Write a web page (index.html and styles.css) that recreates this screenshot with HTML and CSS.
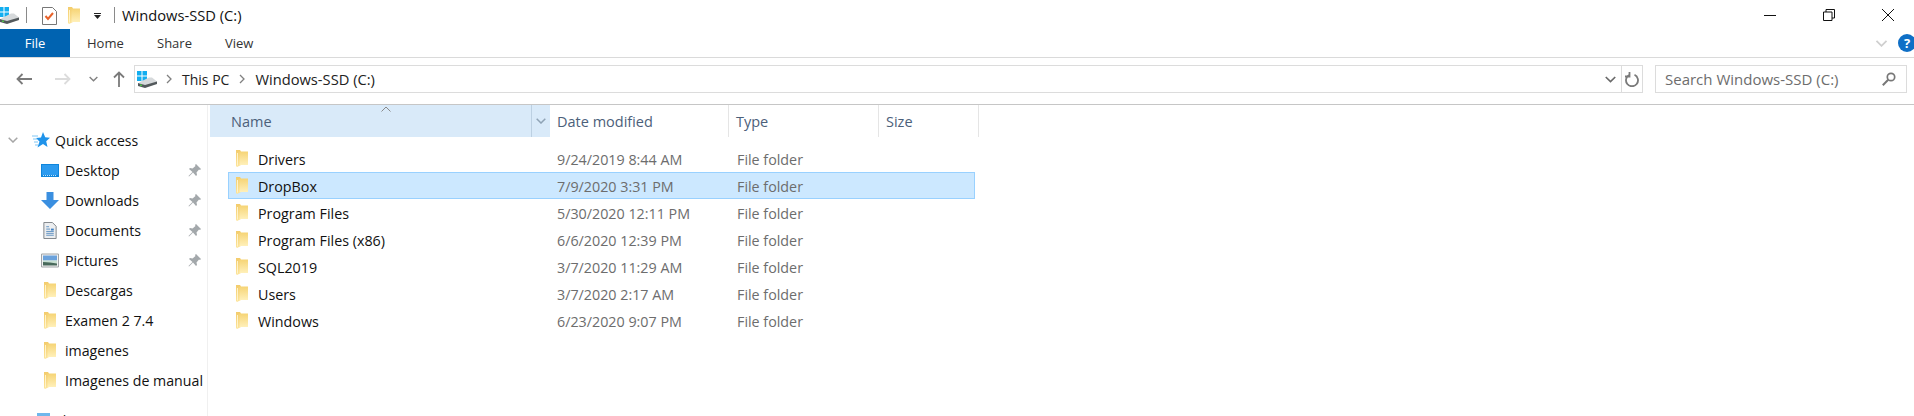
FILE: index.html
```html
<!DOCTYPE html>
<html lang="en">
<head>
  <meta charset="UTF-8">
  <title>Windows-SSD (C:)</title>
  <link rel="stylesheet" href="styles.css">
</head>
<body>

  <!-- shared icons -->
  <svg class="defs" aria-hidden="true">
    <defs>
      <linearGradient id="folderFill" x1="0" y1="0" x2="0" y2="1">
        <stop offset="0" stop-color="#f6d475"/>
        <stop offset="1" stop-color="#fff0ba"/>
      </linearGradient>
      <linearGradient id="folderFlap" x1="0" y1="0" x2="0" y2="1">
        <stop offset="0" stop-color="#f3cc6c"/>
        <stop offset="1" stop-color="#fde59c"/>
      </linearGradient>
      <symbol id="folder" viewBox="0 0 12 17">
        <path d="M0 0h4l1 1.500V15l-4 2-1-1z" fill="url(#folderFlap)"/>
        <path d="M3.500 1.500H12V15H3.500z" fill="url(#folderFill)"/>
        <path d="M1.500 3v12.500" stroke="#fff3c9" stroke-width="1"/>
      </symbol>
      <symbol id="drive" viewBox="0 0 20 17">
        <path d="M0 0h4.500v4.500H0zM5.500 0H10v4.500H5.500zM0 5.500h4.500V10H0zM5.500 5.500H10V10H5.500z" fill="#12aef0"/>
        <path d="M2 11.500L12 6.500h3L20 10.500v2.500L8 15z" fill="#d6d9db"/>
        <path d="M1 12l7 2 12-3.500V13L8 17 1 15z" fill="#53595c"/>
        <path d="M3 13.500h2v1.500H3z" fill="#4fc04a"/>
      </symbol>
      <symbol id="pin" viewBox="0 0 13 13">
        <path d="M8 0l5 5-1 1-1-.5L8.500 8.500 9 11l-1 1-3-3.500L1 12.500.5 12 4.500 8 1 5l1-1 2.500.5L7.500 2 7 1z" fill="#a3a8ab"/>
      </symbol>
      <symbol id="chev" viewBox="0 0 10 6">
        <path d="M.7.700L5 5l4.300-4.300" fill="none" stroke="currentColor" stroke-width="1.500"/>
      </symbol>
    </defs>
  </svg>

  <header class="titlebar">
    <svg class="qa-drive"><use href="#drive"/></svg>
    <span class="qa-sep"></span>
    <svg class="qa-props" viewBox="0 0 15 18">
      <path d="M.5.500h10l4 4v13H.5z" fill="#fff" stroke="#777"/>
      <path d="M3.500 9l2.500 3 5-6" fill="none" stroke="#e8622a" stroke-width="2"/>
    </svg>
    <svg class="qa-folder"><use href="#folder"/></svg>
    <svg class="qa-more" viewBox="0 0 7 6">
      <path d="M0 0h7v1H0zM0 2h7L3.500 6z" fill="#222"/>
    </svg>
    <span class="qa-sep title-sep"></span>
    <span class="window-title">Windows-SSD (C:)</span>
    <div class="window-controls">
      <svg class="win-btn" viewBox="0 0 12 12"><path d="M0 6.500h12" stroke="#111" fill="none"/></svg>
      <svg class="win-btn" viewBox="0 0 12 12"><path d="M.5 3h8.500v8.500H.5zM3 3V.500h8.500V9H9" stroke="#111" fill="none"/></svg>
      <svg class="win-btn" viewBox="0 0 12 12"><path d="M0 0l12 12M12 0L0 12" stroke="#111" fill="none"/></svg>
    </div>
  </header>

  <nav class="ribbon">
    <a class="tab tab-file">File</a>
    <a class="tab">Home</a>
    <a class="tab">Share</a>
    <a class="tab">View</a>
    <svg class="ribbon-chev"><use href="#chev"/></svg>
    <span class="help">?</span>
  </nav>

  <div class="navbar">
    <svg class="nav-arrow" viewBox="0 0 16 12"><path d="M16 6H1.500M6.500 1L1.500 6l5 5" fill="none" stroke="#7a7a7a" stroke-width="1.800"/></svg>
    <svg class="nav-arrow nav-forward" viewBox="0 0 16 12"><path d="M0 6h14.500M9.500 1l5 5-5 5" fill="none" stroke="#dcdcdc" stroke-width="1.800"/></svg>
    <svg class="nav-recent"><use href="#chev"/></svg>
    <svg class="nav-up" viewBox="0 0 12 16"><path d="M6 16V1.500M1 6.500l5-5 5 5" fill="none" stroke="#7a7a7a" stroke-width="1.800"/></svg>

    <div class="address">
      <svg class="address-drive"><use href="#drive"/></svg>
      <svg class="crumb-sep" viewBox="0 0 6 10"><path d="M1 1l4 4-4 4" fill="none" stroke="#808080" stroke-width="1.300"/></svg>
      <span class="crumb">This PC</span>
      <svg class="crumb-sep" viewBox="0 0 6 10"><path d="M1 1l4 4-4 4" fill="none" stroke="#808080" stroke-width="1.300"/></svg>
      <span class="crumb crumb-drive">Windows-SSD (C:)</span>
      <svg class="address-drop"><use href="#chev"/></svg>
      <span class="address-refresh">
        <svg viewBox="0 0 14 15"><path d="M4.500 2.800a6 6 0 1 0 5 0M4.500 0v4.500H0" fill="none" stroke="#7a7a7a" stroke-width="1.800"/></svg>
      </span>
    </div>

    <div class="search">
      <span>Search Windows-SSD (C:)</span>
      <svg viewBox="0 0 14 14"><circle cx="9" cy="5" r="3.700" fill="none" stroke="#777" stroke-width="1.700"/><path d="M6.200 7.800L.8 13.200" stroke="#777" stroke-width="2"/></svg>
    </div>
  </div>

  <main class="explorer">
    <aside class="sidebar">
      <div class="side-row side-head">
        <svg class="side-chev"><use href="#chev"/></svg>
        <svg class="side-star" viewBox="0 0 18 17">
          <path d="M11 0l2.200 5.300 4.800.4-3.800 3.600L15.500 15 11 12l-5.500 3.500L7.500 9.500 4 6l5-.5z" fill="#1f93ea"/>
          <path d="M0 4h6M1 7h4M2 10h4M3 13h3" stroke="#7fc6f5" stroke-width="1"/>
        </svg>
        <span>Quick access</span>
      </div>

      <div class="side-row">
        <svg class="side-icon" viewBox="0 0 18 13"><path d="M0 0h18v13H0z" fill="#0f86dc"/><path d="M1 1h16v10H1z" fill="#2c9bef"/><path d="M2 11.500h14" stroke="#bfe2fa" stroke-dasharray="1 1"/></svg>
        <span class="side-label">Desktop</span>
        <svg class="side-pin"><use href="#pin"/></svg>
      </div>
      <div class="side-row">
        <svg class="side-icon" viewBox="0 0 18 17"><path d="M5.500 0h7v8H18l-9 9-9-9h5.500z" fill="#3a8fe0"/></svg>
        <span class="side-label">Downloads</span>
        <svg class="side-pin"><use href="#pin"/></svg>
      </div>
      <div class="side-row">
        <svg class="side-icon" viewBox="0 0 18 18"><path d="M2.500.500h9l4 4v13h-13z" fill="#eceef0" stroke="#7b8186"/><path d="M5 5h3M5 7.500h4M5 10h8M5 12h8M5 14h8" stroke="#5c8fc0"/><path d="M10 7h3v2h-3z" fill="#3c7fc4"/></svg>
        <span class="side-label">Documents</span>
        <svg class="side-pin"><use href="#pin"/></svg>
      </div>
      <div class="side-row">
        <svg class="side-icon" viewBox="0 0 18 14"><path d="M.5.500h17v13H.5z" fill="#f2f2f2" stroke="#a0a4a7"/><path d="M2 2h14v5H2z" fill="#6ba2dc"/><path d="M2 7h14v3H2z" fill="#c7dfd2"/><path d="M2 8.500l7 .5 7 1v2H2z" fill="#48695b"/></svg>
        <span class="side-label">Pictures</span>
        <svg class="side-pin"><use href="#pin"/></svg>
      </div>
      <div class="side-row">
        <svg class="side-icon"><use href="#folder"/></svg>
        <span class="side-label">Descargas</span>
      </div>
      <div class="side-row">
        <svg class="side-icon"><use href="#folder"/></svg>
        <span class="side-label">Examen 2 7.4</span>
      </div>
      <div class="side-row">
        <svg class="side-icon"><use href="#folder"/></svg>
        <span class="side-label">imagenes</span>
      </div>
      <div class="side-row">
        <svg class="side-icon"><use href="#folder"/></svg>
        <span class="side-label">Imagenes de manual</span>
      </div>

      <div class="side-row side-head side-pc">
        <svg class="side-star" viewBox="0 0 13 14"><path d="M0 0h13v11H0z" fill="#6fb7ec"/></svg>
        <span>This PC</span>
      </div>
    </aside>

    <section class="files">
      <div class="col-head">
        <div class="col col-name">
          <span>Name</span>
          <svg class="sort-arrow" viewBox="0 0 10 6"><path d="M.5 5.500L5 1l4.500 4.500" fill="none" stroke="#8a8a8a"/></svg>
          <span class="col-drop"><svg><use href="#chev"/></svg></span>
        </div>
        <div class="col col-date">Date modified</div>
        <div class="col col-type">Type</div>
        <div class="col col-size">Size</div>
      </div>

      <div class="rows">
        <div class="row"><svg><use href="#folder"/></svg><span class="name">Drivers</span><span>9/24/2019 8:44 AM</span><span>File folder</span></div>
        <div class="row selected"><svg><use href="#folder"/></svg><span class="name">DropBox</span><span>7/9/2020 3:31 PM</span><span>File folder</span></div>
        <div class="row"><svg><use href="#folder"/></svg><span class="name">Program Files</span><span>5/30/2020 12:11 PM</span><span>File folder</span></div>
        <div class="row"><svg><use href="#folder"/></svg><span class="name">Program Files (x86)</span><span>6/6/2020 12:39 PM</span><span>File folder</span></div>
        <div class="row"><svg><use href="#folder"/></svg><span class="name">SQL2019</span><span>3/7/2020 11:29 AM</span><span>File folder</span></div>
        <div class="row"><svg><use href="#folder"/></svg><span class="name">Users</span><span>3/7/2020 2:17 AM</span><span>File folder</span></div>
        <div class="row"><svg><use href="#folder"/></svg><span class="name">Windows</span><span>6/23/2020 9:07 PM</span><span>File folder</span></div>
      </div>
    </section>
  </main>

</body>
</html>
```

FILE: styles.css
```css
* {
  box-sizing: border-box;
}

html, body {
  height: 416px;
}

body {
  margin: 0;
  overflow: hidden;
  background: #fff;
  color: #111;
  font-family: "Open Sans", "Noto Sans", sans-serif;
  font-size: 14px;
}

svg {
  display: block;
  flex: none;
}

.defs {
  width: 0;
  height: 0;
}

/* title bar */
.titlebar {
  display: flex;
  align-items: center;
  height: 29px;
}

.qa-drive {
  width: 20px;
  height: 17px;
  margin-top: 2px;
  margin-left: -1px;
}

.qa-sep {
  width: 1px;
  height: 16px;
  margin-left: 7px;
  background: #8a8a8a;
}

.qa-props {
  width: 15px;
  height: 18px;
  margin-left: 15px;
  margin-top: 2px;
}

.qa-folder {
  width: 12px;
  height: 17px;
  margin-left: 11px;
  margin-top: 2px;
}

.qa-more {
  width: 7px;
  height: 6px;
  margin-left: 14px;
  margin-top: 3px;
}

.title-sep {
  margin-left: 13px;
}

.window-title {
  margin-left: 7px;
  font-size: 14.7px;
}

.window-controls {
  display: flex;
  gap: 47px;
  margin-left: auto;
  margin-right: 20px;
}

.win-btn {
  width: 12px;
  height: 12px;
}

/* ribbon */
.ribbon {
  display: flex;
  align-items: center;
  height: 29px;
  border-bottom: 1px solid #dadada;
}

.tab {
  width: 68px;
  height: 28px;
  padding-left: 17px;
  line-height: 28px;
  font-size: 13px;
  color: #333;
}

.ribbon .tab:nth-child(2) {
  width: 70px;
}

.tab-file {
  width: 70px;
  padding: 0;
  background: #0063b1;
  color: #fff;
  text-align: center;
}

.ribbon-chev {
  width: 13px;
  height: 7px;
  margin-left: auto;
  margin-right: 10px;
  color: #cfcfcf;
}

.help {
  width: 18px;
  height: 18px;
  margin-right: -2px;
  border-radius: 50%;
  background: #0f6fc6;
  color: #fff;
  font-size: 13px;
  font-weight: 700;
  line-height: 18px;
  text-align: center;
}

/* navigation bar */
.navbar {
  display: flex;
  align-items: center;
  height: 47px;
  padding: 0 7px 4px 16px;
  border-bottom: 1px solid #c6c6c6;
}

.nav-arrow {
  width: 16px;
  height: 12px;
}

.nav-forward {
  margin-left: 23px;
}

.nav-recent {
  width: 9px;
  height: 6px;
  margin-left: 18px;
  color: #808080;
}

.nav-up {
  width: 12px;
  height: 16px;
  margin-left: 15px;
}

.address {
  display: flex;
  flex: 1;
  align-items: center;
  height: 28px;
  margin-left: 9px;
  padding-left: 2px;
  border: 1px solid #dcdcdc;
}

.address-drive {
  width: 20px;
  height: 17px;
}

.crumb-sep {
  width: 6px;
  height: 10px;
  margin: 0 10px;
}

.address-drive + .crumb-sep {
  margin-left: 9px;
}

.crumb {
  color: #222;
}

.crumb-drive {
  font-size: 14.7px;
}

.address-drop {
  width: 11px;
  height: 7px;
  margin-left: auto;
  margin-right: 5px;
  color: #6a6a6a;
}

.address-refresh {
  display: flex;
  align-items: center;
  justify-content: center;
  width: 21px;
  height: 100%;
  border-left: 1px solid #dcdcdc;
}

.address-refresh svg {
  width: 14px;
  height: 15px;
}

.search {
  display: flex;
  align-items: center;
  justify-content: space-between;
  width: 252px;
  height: 28px;
  margin-left: 12px;
  padding: 0 10px 0 9px;
  border: 1px solid #dcdcdc;
  color: #6d6d6d;
  font-size: 15px;
}

.search svg {
  width: 14px;
  height: 14px;
}

/* main area */
.explorer {
  display: flex;
  height: 311px;
  overflow: hidden;
}

.sidebar {
  width: 208px;
  padding-top: 20px;
  border-right: 1px solid #f0f0f0;
}

.side-row {
  display: flex;
  align-items: center;
  height: 30px;
  padding-left: 41px;
  white-space: nowrap;
}

.side-head {
  padding-left: 8px;
}

.side-chev {
  width: 10px;
  height: 6px;
  color: #a6a6a6;
}

.side-star {
  width: 18px;
  height: 17px;
  margin: 0 5px 0 14px;
}

.side-icon {
  width: 18px;
  height: 17px;
}

.side-label {
  margin-left: 6px;
  font-size: 14.2px;
}

.side-pin {
  width: 13px;
  height: 13px;
  margin-left: auto;
  margin-right: 6px;
}

.side-pc {
  margin-top: 10px;
  padding-left: 23px;
}

.side-pc .side-star {
  width: 13px;
  height: 14px;
}

/* file list */
.files {
  flex: 1;
  padding-left: 2px;
}

.col-head {
  display: flex;
  height: 32px;
  color: #4c607a;
  font-size: 14.5px;
}

.col {
  display: flex;
  align-items: center;
  height: 32px;
  padding-left: 7px;
  border-right: 1px solid #e5e5e5;
}

.col-name {
  position: relative;
  width: 340px;
  padding-left: 21px;
  background: #d9eaf9;
  border-right: none;
}

.sort-arrow {
  position: absolute;
  top: 1px;
  left: 171px;
  width: 10px;
  height: 6px;
}

.col-drop {
  display: flex;
  align-items: center;
  justify-content: center;
  width: 19px;
  height: 100%;
  margin-left: auto;
  border-left: 1px solid #bcd0e2;
  color: #8fa3b5;
}

.col-drop svg {
  width: 10px;
  height: 6px;
}

.col-date {
  width: 179px;
}

.col-type {
  width: 150px;
}

.col-size {
  width: 100px;
}

.rows {
  width: 747px;
  margin-left: 18px;
  padding-top: 8px;
}

.row {
  display: grid;
  grid-template-columns: 22px 299px 180px 1fr;
  align-items: center;
  height: 27px;
  padding: 2px 0 0 7px;
  border: 1px solid transparent;
  color: #6d6d6d;
  font-size: 14.3px;
}

.row svg {
  width: 12px;
  height: 17px;
  margin-top: -2px;
}

.row .name {
  color: #111;
}

.row.selected {
  background: #cce8ff;
  border-color: #99d1ff;
}
```
